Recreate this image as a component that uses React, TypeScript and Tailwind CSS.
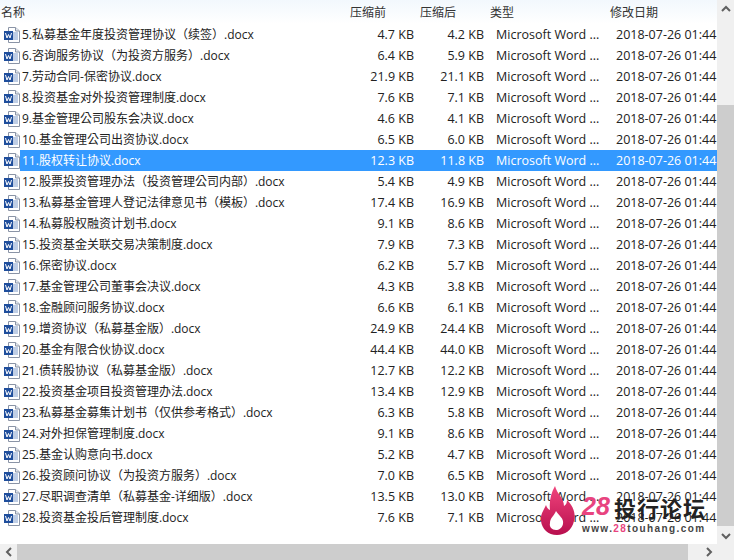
const files = [
  ['5.私募基金年度投资管理协议（续签）.docx', '4.7 KB', '4.2 KB'],
  ['6.咨询服务协议（为投资方服务）.docx', '6.4 KB', '5.9 KB'],
  ['7.劳动合同-保密协议.docx', '21.9 KB', '21.1 KB'],
  ['8.投资基金对外投资管理制度.docx', '7.6 KB', '7.1 KB'],
  ['9.基金管理公司股东会决议.docx', '4.6 KB', '4.1 KB'],
  ['10.基金管理公司出资协议.docx', '6.5 KB', '6.0 KB'],
  ['11.股权转让协议.docx', '12.3 KB', '11.8 KB'],
  ['12.股票投资管理办法（投资管理公司内部）.docx', '5.4 KB', '4.9 KB'],
  ['13.私募基金管理人登记法律意见书（模板）.docx', '17.4 KB', '16.9 KB'],
  ['14.私募股权融资计划书.docx', '9.1 KB', '8.6 KB'],
  ['15.投资基金关联交易决策制度.docx', '7.9 KB', '7.3 KB'],
  ['16.保密协议.docx', '6.2 KB', '5.7 KB'],
  ['17.基金管理公司董事会决议.docx', '4.3 KB', '3.8 KB'],
  ['18.金融顾问服务协议.docx', '6.6 KB', '6.1 KB'],
  ['19.增资协议（私募基金版）.docx', '24.9 KB', '24.4 KB'],
  ['20.基金有限合伙协议.docx', '44.4 KB', '44.0 KB'],
  ['21.债转股协议（私募基金版）.docx', '12.7 KB', '12.2 KB'],
  ['22.投资基金项目投资管理办法.docx', '13.4 KB', '12.9 KB'],
  ['23.私募基金募集计划书（仅供参考格式）.docx', '6.3 KB', '5.8 KB'],
  ['24.对外担保管理制度.docx', '9.1 KB', '8.6 KB'],
  ['25.基金认购意向书.docx', '5.2 KB', '4.7 KB'],
  ['26.投资顾问协议（为投资方服务）.docx', '7.0 KB', '6.5 KB'],
  ['27.尽职调查清单（私募基金-详细版）.docx', '13.5 KB', '13.0 KB'],
  ['28.投资基金投后管理制度.docx', '7.6 KB', '7.1 KB'],
]

function WordIcon() {
  return (
    <svg width="16" height="16" viewBox="0 0 16 16" className="shrink-0">
      <path d="M4.5 0.5H11.5L15.5 4V15.5H4.5Z" fill="#fff" stroke="#8a94a6" />
      <path d="M11.5 0.5V4H15.5" fill="#e4e8ef" stroke="#8a94a6" />
      <path d="M9 6H14M9 8H14M9 10H14M9 12H14" stroke="#7f9ccb" />
      <rect x="0" y="4" width="9" height="9" fill="#1f4e9c" />
      <path d="M1.5 6L3 11L4.5 7.5L6 11L7.5 6" fill="none" stroke="#fff" strokeWidth="1" />
    </svg>
  )
}

function Chevron({ dir }: { dir: 'up' | 'down' | 'left' | 'right' }) {
  const d = {
    up: 'M1 6L5 2L9 6',
    down: 'M1 2L5 6L9 2',
    left: 'M6 1L2 5L6 9',
    right: 'M2 1L6 5L2 9',
  }[dir]
  const box = dir === 'up' || dir === 'down' ? '0 0 10 8' : '0 0 8 10'
  const size = dir === 'up' || dir === 'down' ? { w: 10, h: 8 } : { w: 8, h: 10 }
  return (
    <svg width={size.w} height={size.h} viewBox={box}>
      <path d={d} fill="none" stroke="#606060" strokeWidth="2" />
    </svg>
  )
}

function Watermark() {
  return (
    <div className="absolute left-[540px] top-[486px] flex items-start">
      <svg width="38" height="50" viewBox="0 0 38 50">
        <defs>
          <linearGradient id="flame" x1="0" y1="0" x2="0" y2="1">
            <stop offset="0" stopColor="#f0447c" />
            <stop offset="1" stopColor="#b80f4e" />
          </linearGradient>
        </defs>
        <path
          d="M15 0C17 8 24 12 24 20C26 19 27 17 27 14C33 20 36 27 34 35C32 44 25 49 17 49C8 49 2 43 1 35C0 28 4 24 6 19C7 22 8 23 10 24C9 15 11 7 15 0Z"
          fill="url(#flame)"
        />
        <path
          d="M16 25C19 30 24 32 23 38C22 42 19 44 16 44C12 44 9 41 10 37C10 32 14 30 16 25Z"
          fill="#fff"
        />
      </svg>
      <div className="ml-[4px] mt-[2px] flex flex-col">
        <div className="flex items-center h-[38px]">
          <span className="w-[32px] text-[25px] font-bold italic text-[#e8447f] font-['Liberation_Sans',sans-serif]">28</span>
          <span className="text-[22px] font-bold tracking-[1px] text-[#222] font-['Noto_Sans_CJK_SC',sans-serif] leading-none">投行论坛</span>
        </div>
        <div className="-mt-[3px] text-[10px] font-bold tracking-[1.4px] leading-[12px] text-[#444] whitespace-nowrap font-['Liberation_Sans',sans-serif]">
          www.<span className="text-[#e8447f]">28</span>touhang.com
        </div>
      </div>
    </div>
  )
}

export default function App() {
  return (
    <div className="relative w-[734px] h-[560px] overflow-hidden bg-white text-[#222] text-[12.5px] font-['Open_Sans','Noto_Sans_CJK_SC',sans-serif]">
      <div className="flex h-[544px]">
        <div className="w-[717px] flex flex-col overflow-hidden">
          {/* Header */}
          <div className="h-[24px] shrink-0 grid grid-cols-[350px_70px_70px_120px_107px] items-center bg-gradient-to-b from-[#f2f8fd] to-white text-[12px] text-[#333] font-['Noto_Sans_CJK_SC',sans-serif]">
            <div className="pl-[1px]">名称</div>
            <div>压缩前</div>
            <div>压缩后</div>
            <div>类型</div>
            <div>修改日期</div>
          </div>
          {/* Rows */}
          <div className="flex flex-col">
            {files.map(([name, before, after], i) => (
              <div key={name} className="h-[21px] shrink-0 grid grid-cols-[350px_70px_70px_120px_107px] items-center whitespace-nowrap">
                <div className="flex items-center pl-[4px]">
                  <WordIcon />
                  <span className={`h-[21px] leading-[22px] pl-[2px] flex-1 text-[12px] font-['Open_Sans','Noto_Sans_CJK_TC',sans-serif] ${i === 6 ? 'text-white bg-[#3399ff]' : ''}`}>{name}</span>
                </div>
                {[before, after].map((v, j) => (
                  <div key={j} className={`h-[21px] leading-[21px] pr-[6px] text-right ${i === 6 ? 'bg-[#3399ff] text-white' : ''}`}>{v}</div>
                ))}
                <div className={`h-[21px] leading-[21px] pl-[6px] ${i === 6 ? 'bg-[#3399ff] text-white' : ''}`}>Microsoft Word ...</div>
                <div className={`h-[21px] leading-[21px] pl-[6px] ${i === 6 ? 'bg-[#3399ff] text-white' : ''}`}>2018-07-26 01:44</div>
              </div>
            ))}
          </div>
        </div>
        {/* Vertical scrollbar */}
        <div className="w-[17px] flex flex-col bg-[#f0f0f0]">
          <div className="h-[17px] flex items-center justify-center"><Chevron dir="up" /></div>
          <div className="flex-1 flex flex-col pt-[88px]">
            <div className="h-[421px] bg-[#cdcdcd]" />
          </div>
          <div className="h-[17px] flex items-center justify-center"><Chevron dir="down" /></div>
        </div>
      </div>
      {/* Horizontal scrollbar */}
      <div className="h-[16px] flex bg-[#f0f0f0]">
        <div className="w-[17px] flex items-center justify-center"><Chevron dir="left" /></div>
        <div className="w-[671px] bg-[#cdcdcd]" />
        <div className="flex-1" />
        <div className="w-[17px] flex items-center justify-center"><Chevron dir="right" /></div>
        <div className="w-[17px]" />
      </div>
      <Watermark />
    </div>
  )
}
